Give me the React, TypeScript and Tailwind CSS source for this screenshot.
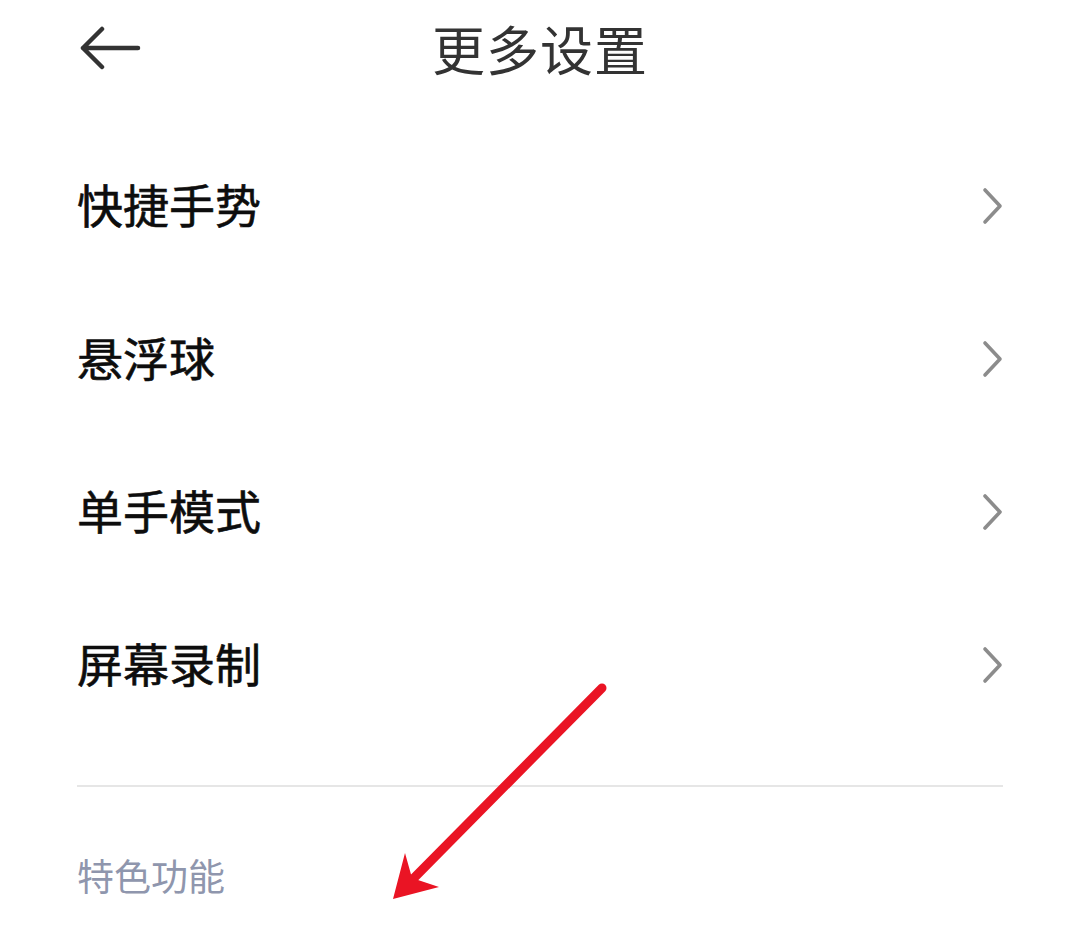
import React from "react";

const items = ["快捷手势", "悬浮球", "单手模式", "屏幕录制"];

const Chevron = () => (
  <svg width="24" height="40" viewBox="0 0 24 40" fill="none">
    <path d="M4 4 L19 20 L4 36" stroke="#8c8c8c" strokeWidth="3.6" strokeLinecap="round" strokeLinejoin="round" />
  </svg>
);

export default function App() {
  return (
    <div
      className="relative w-[1080px] h-[939px] bg-white overflow-hidden"
      style={{ fontFamily: '"Noto Sans CJK SC", "Noto Sans", sans-serif' }}
    >
      {/* header */}
      <div className="relative h-[96px] flex items-center justify-center">
        <button className="absolute left-[78px] top-[26px]">
          <svg width="64" height="44" viewBox="0 0 64 44" fill="none">
            <path d="M60 22 H5 M24 3 L5 22 L24 41" stroke="#333333" strokeWidth="4.5" strokeLinecap="round" strokeLinejoin="round" />
          </svg>
        </button>
        <h1 className="text-[53px] leading-none text-[#333333] tracking-[1px]">更多设置</h1>
      </div>

      {/* list */}
      <div className="pt-[30px] px-[77px]">
        {items.map((t) => (
          <div key={t} className="h-[153px] flex items-center justify-between">
            <span className="text-[46px] leading-none text-[#0d0d0d] [-webkit-text-stroke:0.6px_#0d0d0d]">{t}</span>
            <span className="mr-[-2px] mt-[6px]">
              <Chevron />
            </span>
          </div>
        ))}
        <div className="mt-[47px] h-[2px] bg-[#e6e6e6]" />
        <div className="pt-[70px] text-[37px] leading-none text-[#8f96ad]">特色功能</div>
      </div>

      {/* red annotation arrow */}
      <svg className="absolute left-0 top-0 pointer-events-none" width="1080" height="939" viewBox="0 0 1080 939">
        <line x1="602" y1="688" x2="412" y2="880" stroke="#ea1424" strokeWidth="9" strokeLinecap="round" />
        <path d="M393 899 L405 853 L412 878 L439 887 Z" fill="#ea1424" />
      </svg>
    </div>
  );
}
